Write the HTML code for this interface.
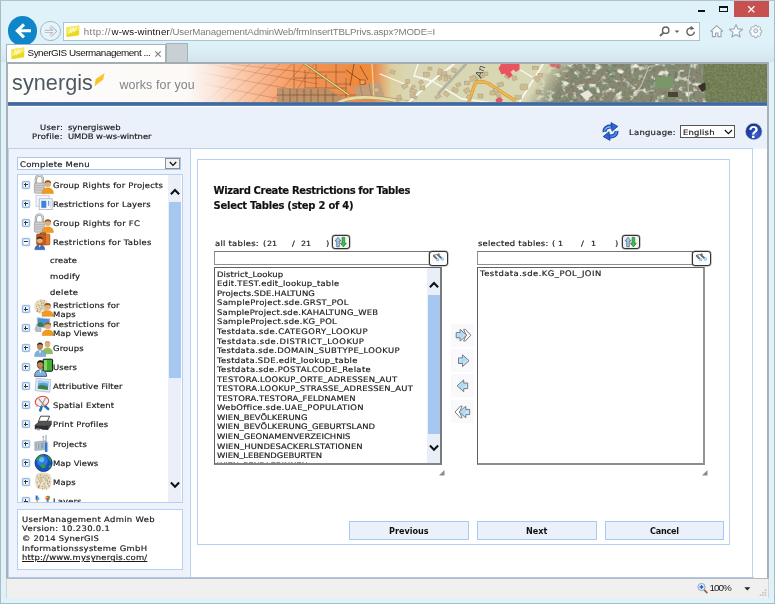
<!DOCTYPE html>
<html lang="en">
<head>
<meta charset="utf-8">
<title>SynerGIS Usermanagement Admin Web</title>
<style>
*{box-sizing:border-box}
html,body{margin:0;padding:0}
body{will-change:transform;width:775px;height:604px;position:relative;overflow:hidden;background:#dff1f9;font-family:"DejaVu Sans","Liberation Sans",sans-serif;font-size:8.4px;letter-spacing:.25px;color:#1a1a1a;line-height:9.6px}
.abs{position:absolute}
svg{position:absolute;overflow:visible}
#frame{position:absolute;left:0;top:0;width:775px;height:604px;border:1px solid #a9bcc3;border-top-color:#b4c3c8;pointer-events:none;z-index:50}
.ui{font-family:"Liberation Sans",sans-serif;letter-spacing:0}
/* browser chrome */
#back{left:7.7px;top:16.2px;width:29.6px;height:29.6px;border-radius:50%;background:#0e86c9}
#fwd{left:40.1px;top:20.7px;width:20.6px;height:20.6px;border-radius:50%;border:1px solid #a3b9c6;background:#e6f4fa}
#addr{left:63px;top:22px;width:636.5px;height:19px;background:#fff;border:1px solid #a9c3d1}
.fav{width:13px;height:11.5px;background:linear-gradient(135deg,#f2e23a 0%,#f7ef8a 45%,#e3c915 100%);border:1px solid #e8d53a}
#tab{left:6px;top:43.6px;width:160px;height:20px;background:#fff;border:1px solid #a3b3bc;border-bottom:none}
#newtab{left:166px;top:43px;width:21.7px;height:19px;background:#c9d0d3;border:1px solid #a7b2b8;border-bottom:none}
#winclose{left:733.5px;top:1px;width:35.5px;height:16px;background:#c75050}
/* page */
#page{left:6px;top:62px;width:763px;height:517px;background:#fff;border:2px solid #a9b1b6;border-bottom:none;border-top-color:#a4adb2}
#status{left:6px;top:578px;width:763px;height:19.5px;background:#f0f0f0;border-left:1px solid #d3d6d8;border-right:1px solid #d3d6d8;border-top:1px solid #b9b9b9}
#banner{left:8px;top:64px;width:759px;height:38.3px;overflow:hidden;background:#fff}
#bline{left:8px;top:102.3px;width:759px;height:4px;background:linear-gradient(#5d82b4,#41679c 35%,#456ba0 70%,#6a8dbd)}
#hband{left:8px;top:107px;width:759px;height:41.5px;background:#ebf1fa}
/* sidebar */
#side{left:8px;top:148px;width:183px;height:430px;background:#edf2fb;border:1px solid #b9d2f3;border-bottom:none}
#msel{left:17px;top:157px;width:163.5px;height:12.8px;background:#fff;border:1px solid #a9c9f0}
#msel span{position:absolute;left:2px;top:1px;font-size:8.8px;white-space:nowrap}
#mselb{left:165.3px;top:158px;width:14.3px;height:10.6px;background:#f2f2f2;border:1px solid #8e8e8e}
#tree{left:17px;top:173.5px;width:165.5px;height:329.2px;background:#fff;border:1px solid #b5d0f2;overflow:hidden}
#tree .in{position:absolute;left:0;top:0;width:150px;height:100%}
.ex{position:absolute;left:3.9px;width:8px;height:8px;border:1px solid #94b8e6;border-radius:1.5px;background:#fff;box-shadow:inset 0 0 0 .5px #a9c7ec,0 0 0 .3px #b5cff0}
.ex:before{content:"";position:absolute;left:1px;top:2.5px;width:4px;height:1px;background:#333}
.ex.plus:after{content:"";position:absolute;left:2.5px;top:1px;width:1px;height:4px;background:#333}
.ic{left:15.5px}
#tsb{left:168.3px;top:174.5px;width:13px;height:327.5px;background:#eaeff9}
#tthumb{left:169px;top:201.8px;width:11.6px;height:176.4px;background:#a6c8f0}
#foot{left:17px;top:509.2px;width:165.5px;height:60.5px;background:#fff;border:1px solid #b5d0f2}
/* main */
#mcell{left:190.5px;top:148px;width:562.5px;height:430px;border:1px solid #b9d2f3;border-left:none;border-bottom:none}
#inner{left:196.5px;top:159px;width:533.5px;height:385.8px;border:1px solid #b5d0f2;background:#fff}
.h1{left:214px;font-weight:700;font-size:10px;letter-spacing:-.22px;white-space:nowrap;line-height:12px;color:#111}
.lbl{white-space:nowrap;font-size:8.5px}
.inp{height:14.4px;background:#fff;border:1px solid #8f8f8f;border-top-color:#777}
.rb{border:1px solid #333;border-radius:3px;background:#f3f3f3;box-shadow:0 0 0 .45px rgba(50,50,50,.55)}
.list{background:#fff;border:1px solid #5f5f5f;border-right-color:#8a8a8a;border-bottom-color:#8a8a8a;overflow:hidden}
.btn{height:19px;background:#ebf1fa;border:1px solid #a9c9f0;font-weight:700;text-align:center;line-height:18.6px;color:#111;white-space:nowrap}
.num{font-size:8px;letter-spacing:.3px}
.abg{left:450.5px;width:23px;height:23px;background:#f9f9fb}
.hl{white-space:nowrap;font-size:8.6px;letter-spacing:.34px}
.t{white-space:nowrap;transform-origin:0 0;-webkit-text-stroke:.17px #1a1a1a}
.t span{position:relative;top:-.9px}
#tstrip{left:1px;top:42px;width:773px;height:20px;background:linear-gradient(#dff1f9,#dbedf5 50%,#d3e4ec)}
</style>
</head>
<body>
<!-- window chrome -->
<div id="tstrip" class="abs"></div>
<div id="back" class="abs"></div>
<svg style="left:7.7px;top:16.2px" width="29.6" height="29.6" viewBox="0 0 29.6 29.6"><path d="M16 8.3l-6.7 6.5 6.7 6.5M9.8 14.8h13.2" fill="none" stroke="#fff" stroke-width="3.1"/></svg>
<div id="fwd" class="abs"></div>
<svg style="left:40.1px;top:20.7px" width="20.6" height="20.6" viewBox="0 0 20.6 20.6"><path d="M10.4 5.6l4.8 4.7-4.8 4.7M4.8 10.3h9.8" fill="none" stroke="#a9b4bb" stroke-width="3" stroke-linejoin="miter"/><path d="M10.4 5.6l4.8 4.7-4.8 4.7M4.8 10.3h9.8" fill="none" stroke="#eef7fb" stroke-width="1.2"/></svg>
<div id="addr" class="abs"></div>
<svg style="left:66px;top:25.2px" width="14" height="13" viewBox="0 0 14 13"><path d="M.5 2.2l12.7-1.7v9.8l-12.7 2z" fill="#ecd91f"/><path d="M.5 2.2l12.7-1.7v4.5l-12.7 4.5z" fill="#f4e75a"/><path d="M3 8.5l1.8-5 .8 3.6 2-4.4.6 3.4 2.8-4" fill="none" stroke="#fffbd0" stroke-width="1.1" opacity=".9"/></svg>
<svg style="left:656px;top:24px" width="42" height="15" viewBox="0 0 42 15"><circle cx="9.7" cy="6.2" r="3.2" fill="none" stroke="#636363" stroke-width="1.4"/><path d="M7.4 8.6l-3.4 3.4" stroke="#636363" stroke-width="1.8"/><path d="M18.6 6.4h4.8l-2.4 2.7z" fill="#636363"/><path d="M36.8 4.7a3.7 3.7 0 1 0 1.5 3" fill="none" stroke="#636363" stroke-width="1.4"/><path d="M34.8 1.8l3.6 2.9-4 1.4z" fill="#636363"/></svg>
<div id="tab" class="abs"></div>
<svg style="left:10.8px;top:47.2px" width="14" height="13" viewBox="0 0 14 13"><path d="M.5 2.2l12.7-1.7v9.8l-12.7 2z" fill="#ecd91f"/><path d="M.5 2.2l12.7-1.7v4.5l-12.7 4.5z" fill="#f4e75a"/><path d="M3 8.5l1.8-5 .8 3.6 2-4.4.6 3.4 2.8-4" fill="none" stroke="#fffbd0" stroke-width="1.1" opacity=".9"/></svg>
<svg style="left:154px;top:49.5px" width="8" height="8" viewBox="0 0 8 8"><path d="M1.3 1.3l5.4 5.4M6.7 1.3l-5.4 5.4" stroke="#7c7c7c" stroke-width="1.1"/></svg>
<div id="newtab" class="abs"></div>
<div id="winclose" class="abs"></div>
<svg style="left:746.5px;top:5px" width="9" height="9" viewBox="0 0 9 9"><path d="M1.2 1.2l6.2 6.2M7.4 1.2l-6.2 6.2" stroke="#fff" stroke-width="1.3"/></svg>
<div class="abs" style="left:698px;top:10px;width:7px;height:2px;background:#111"></div>
<div class="abs" style="left:719px;top:5.5px;width:8.5px;height:6.5px;border:1px solid #111;border-top-width:2px"></div>
<svg style="left:706px;top:22px" width="60" height="18" viewBox="0 0 60 18"><g fill="#f6fbfe" stroke="#9aa6ad" stroke-width="1.1" stroke-linejoin="round"><path d="M4.8 9.2l5.9-5.6 5.9 5.6h-1.6v5.4h-3.1v-3.6h-2.4v3.6h-3.1v-5.4z"/><path d="M30 2.6l1.9 4.3 4.7.4-3.6 3.1 1.1 4.6-4.1-2.5-4.1 2.5 1.1-4.6-3.6-3.1 4.7-.4z"/></g><g transform="translate(49.7 8.8) scale(.86)"><path d="M-1.2-6.3h2.4l.4 1.6 1.2.5 1.4-.9 1.7 1.7-.9 1.4.5 1.2 1.6.4v2.4l-1.6.4-.5 1.2.9 1.4-1.7 1.7-1.4-.9-1.2.5-.4 1.6h-2.4l-.4-1.6-1.2-.5-1.4.9-1.7-1.7.9-1.4-.5-1.2-1.6-.4v-2.4l1.6-.4.5-1.2-.9-1.4 1.7-1.7 1.4.9 1.2-.5z" fill="#f6fbfe" stroke="#9aa6ad" stroke-width="1.1" stroke-linejoin="round"/><circle r="2.3" fill="#dff1f9" stroke="#9aa6ad" stroke-width="1.1"/></g></svg>
<!-- page -->
<div id="page" class="abs"></div>
<div id="status" class="abs"></div>
<svg style="left:695px;top:581px" width="72" height="16" viewBox="0 0 72 16"><circle cx="6.5" cy="6" r="3.6" fill="#e9f2fb" stroke="#8aa4c4" stroke-width="1"/><path d="M4.6 6h3.8M6.5 4.1v3.8" stroke="#1f5fd0" stroke-width="1.3"/><path d="M9.2 8.8l3.2 3.4" stroke="#a0622d" stroke-width="1.7"/><path d="M49.3 6.3h6l-3 3.2z" fill="#222"/><g fill="#bdbdbd"><rect x="69.7" y="8.5" width="1.5" height="1.5"/><rect x="67.2" y="11" width="1.5" height="1.5"/><rect x="69.7" y="11" width="1.5" height="1.5"/><rect x="64.7" y="13.4" width="1.5" height="1.5"/><rect x="67.2" y="13.4" width="1.5" height="1.5"/><rect x="69.7" y="13.4" width="1.5" height="1.5"/></g></svg>

<div id="banner" class="abs">
<svg style="left:0;top:0" width="759" height="39" viewBox="0 0 759 39">
<defs>
<linearGradient id="g1" x1="0" x2="1"><stop offset="0" stop-color="#fdfdfc"/><stop offset=".235" stop-color="#fcf9f6"/><stop offset=".27" stop-color="#fbe6da"/><stop offset=".305" stop-color="#f9ccae"/><stop offset=".34" stop-color="#f7b388"/><stop offset=".375" stop-color="#f59d62"/><stop offset=".41" stop-color="#f3904e"/><stop offset=".483" stop-color="#ea8a4a"/><stop offset=".505" stop-color="#dccf9f"/><stop offset=".525" stop-color="#d9d7b3"/><stop offset=".74" stop-color="#d8d8b5"/><stop offset="1" stop-color="#d5d2ae"/></linearGradient>
<linearGradient id="gf" gradientUnits="userSpaceOnUse" x1="188" x2="285" y1="0" y2="0"><stop offset="0" stop-color="#d9856a" stop-opacity="0"/><stop offset=".5" stop-color="#d37a5c" stop-opacity=".55"/><stop offset="1" stop-color="#b9623f" stop-opacity=".9"/></linearGradient>
<filter id="nz" x="0" y="0" width="100%" height="100%"><feTurbulence type="fractalNoise" baseFrequency=".1 .13" numOctaves="3" seed="7" result="t"/><feColorMatrix in="t" type="matrix" values="0 0 0 0 .22  0 0 0 0 .27  0 0 0 0 .17  3.2 1.6 0 0 -2.05"/><feComposite operator="in" in2="SourceGraphic"/></filter>
<filter id="nz2" x="0" y="0" width="100%" height="100%"><feTurbulence type="fractalNoise" baseFrequency=".13 .16" numOctaves="3" seed="23" result="t"/><feColorMatrix in="t" type="matrix" values="0 0 0 0 .86  0 0 0 0 .85  0 0 0 0 .78  0 3.4 1.8 0 -2.75"/><feComposite operator="in" in2="SourceGraphic"/></filter>
<filter id="nz3" x="0" y="0" width="100%" height="100%"><feTurbulence type="fractalNoise" baseFrequency=".33 .36" numOctaves="2" seed="11" result="t"/><feColorMatrix in="t" type="matrix" values="0 0 0 0 .14  0 0 0 0 .18  0 0 0 0 .11  2.6 0 1.8 0 -2.3"/><feComposite operator="in" in2="SourceGraphic"/></filter>
<linearGradient id="pmg" gradientUnits="userSpaceOnUse" x1="531" y1="13.4" x2="551" y2="25.6"><stop offset="0" stop-color="#fff" stop-opacity="0"/><stop offset="1" stop-color="#fff" stop-opacity="1"/></linearGradient><mask id="pm" maskUnits="userSpaceOnUse" x="500" y="0" width="259" height="39"><rect x="500" width="259" height="39" fill="url(#pmg)"/></mask>
<filter id="nz4" x="0" y="0" width="100%" height="100%"><feTurbulence type="fractalNoise" baseFrequency=".42 .46" numOctaves="2" seed="4" result="t"/><feColorMatrix in="t" type="matrix" values="0 0 0 0 .22  0 0 0 0 .27  0 0 0 0 .15  3.4 0 0 0 -1.35"/><feComposite operator="in" in2="SourceGraphic"/></filter>
<clipPath id="cb"><rect width="759" height="39"/></clipPath>
</defs>
<g clip-path="url(#cb)">
<rect width="759" height="39" fill="url(#g1)"/>
<!-- cadastral parcels -->
<g stroke="url(#gf)" stroke-width=".7" fill="none">
<path d="M196 39l46-39M212 39l46-39M228 39l44-39M244 39l40-39M262 39l34-39M280 39l26-39"/>
<path d="M190 8l120 22M200 0l110 20M196 20l96 19M222 0l90 10"/>
</g>
<g stroke="#7b4a2c" stroke-width=".7" fill="none" opacity=".8">
<path d="M286 0v39M297 6v33M308 0v24M318 10v29M328 0v22M338 14v25M350 0v18"/>
<path d="M286 14h32M297 24h41M308 8h30M318 31h34M328 20h26"/>
</g>
<path d="M269 24h50l14 8 4 7h-68z" fill="#b3906c" opacity=".8"/>
<path d="M275 25v14M282 25v14M289 25v14M296 25v14M303 25v14M310 25v14M317 25v14M325 29v10M269 31h60" stroke="#6f4e33" stroke-width=".6"/>
<path d="M336 4l10-4h14l6 10-8 12-14 2z" fill="#f08a3c"/>
<path d="M338 6l20 14M346 0l-4 22M352 2l8 14" stroke="#5b2f14" stroke-width=".6" fill="none"/>
<rect x="352" y="16" width="5" height="4.5" fill="#f7a25a" stroke="#5b2f14" stroke-width=".5"/>
<path d="M345 23l27-5 5 15-27 3z" fill="#b9a083" opacity=".8"/><path d="M352 22l3 13M361 20l3 14" stroke="#7d6a55" stroke-width=".5"/><path d="M364 0l2 36" stroke="#e9d98a" stroke-width="1.2"/>
<!-- yellow diagonal road -->
<path d="M297 0l44 31" stroke="#7a6a3a" stroke-width="2.3"/><path d="M297 0l44 31" stroke="#f1e089" stroke-width="1.3"/>
<path d="M330 39c10-7 34-7 60-2l14 2" stroke="#a8976a" stroke-width="4.2" fill="none"/><path d="M330 39c10-7 34-7 60-2l14 2" stroke="#ead9a0" stroke-width="2.8" fill="none"/>
<!-- town map -->
<g stroke="#fbfaf3" fill="none" stroke-linecap="round">
<path d="M446 0l-22 17-24 22" stroke-width="1.8"/><path d="M410 0l-4 12 18 5" stroke-width="1.3"/><path d="M424 17l30 18 34 4" stroke-width="1.3"/>
<path d="M372 10l30 12" stroke-width="1.1"/><path d="M535 0l-23.5 38" stroke-width="1.7"/><path d="M512.5 6l11.5 7" stroke-width="1.3"/>
</g>
<path d="M458 0l-28 30" stroke="#b9b8a6" stroke-width="3"/><path d="M458 0l-28 30" stroke="#8f8f86" stroke-width=".6" stroke-dasharray="1.5 1.5"/>
<path d="M460.5 39l6.5-19.5 3-1.5h6.5l4 1.5 27 17.5" stroke="#c99a3a" stroke-width="3.4" fill="none" stroke-linejoin="round"/><path d="M460.5 39l6.5-19.5 3-1.5h6.5l4 1.5 27 17.5" stroke="#f0b84a" stroke-width="2.2" fill="none" stroke-linejoin="round"/>
<g fill="#cdbb94" stroke="#a8946c" stroke-width=".4">
<rect x="484.6" y="25.5" width="5.9" height="4.4" transform="rotate(40 487.6 27.7)"/><rect x="489.5" y="18.5" width="6.0" height="4.1" transform="rotate(-15 492.6 20.6)"/><rect x="489.0" y="30.7" width="3.8" height="3.6" transform="rotate(-15 490.9 32.5)"/><rect x="444.0" y="4.4" width="4.2" height="4.0" transform="rotate(15 446.1 6.4)"/><rect x="427.0" y="31.2" width="5.8" height="3.1" transform="rotate(-30 429.9 32.8)"/><rect x="403.3" y="21.4" width="3.9" height="2.8" transform="rotate(-30 405.3 22.8)"/><rect x="415.2" y="8.1" width="6.4" height="4.3" transform="rotate(0 418.4 10.3)"/><rect x="432.7" y="7.6" width="6.1" height="3.9" transform="rotate(-15 435.8 9.5)"/><rect x="430.2" y="12.9" width="4.0" height="3.0" transform="rotate(-30 432.2 14.4)"/><rect x="435.8" y="28.0" width="5.3" height="3.8" transform="rotate(40 438.4 29.9)"/><rect x="436.8" y="11.2" width="6.0" height="3.6" transform="rotate(0 439.7 13.0)"/><rect x="411.0" y="16.6" width="4.0" height="3.2" transform="rotate(-30 413.1 18.2)"/><rect x="447.9" y="19.1" width="4.8" height="3.4" transform="rotate(-30 450.3 20.8)"/><rect x="456.1" y="24.4" width="5.4" height="4.4" transform="rotate(-30 458.8 26.6)"/><rect x="507.0" y="31.7" width="6.3" height="3.4" transform="rotate(0 510.1 33.4)"/><rect x="530.0" y="9.3" width="4.9" height="3.8" transform="rotate(0 532.4 11.2)"/><rect x="524.4" y="2.2" width="6.3" height="3.0" transform="rotate(0 527.6 3.7)"/><rect x="466.2" y="13.0" width="3.9" height="3.3" transform="rotate(40 468.1 14.6)"/><rect x="471.6" y="11.3" width="4.5" height="3.1" transform="rotate(-30 473.8 12.9)"/><rect x="485.3" y="24.8" width="4.4" height="3.6" transform="rotate(40 487.5 26.6)"/><rect x="388.2" y="33.6" width="5.1" height="3.5" transform="rotate(-15 390.7 35.3)"/><rect x="504.4" y="12.3" width="4.3" height="3.9" transform="rotate(-15 506.5 14.3)"/><rect x="389.4" y="31.2" width="3.6" height="3.6" transform="rotate(-15 391.2 33.0)"/><rect x="401.9" y="25.1" width="6.3" height="3.9" transform="rotate(15 405.1 27.1)"/><rect x="397.9" y="15.3" width="3.9" height="4.2" transform="rotate(0 399.9 17.5)"/><rect x="403.7" y="31.4" width="5.4" height="3.1" transform="rotate(25 406.4 33.0)"/><rect x="456.2" y="17.1" width="5.7" height="3.6" transform="rotate(0 459.0 18.9)"/><rect x="459.0" y="30.8" width="3.8" height="4.2" transform="rotate(25 460.9 32.9)"/><rect x="463.9" y="12.2" width="3.8" height="3.3" transform="rotate(25 465.8 13.8)"/><rect x="525.7" y="12.9" width="5.9" height="4.1" transform="rotate(40 528.7 15.0)"/>
<rect x="382" y="6" width="5" height="3.5" transform="rotate(20 384 8)"/><rect x="394" y="20" width="6" height="4" transform="rotate(-30 397 22)"/><rect x="412" y="22" width="5" height="4"/><rect x="430" y="5" width="4" height="6" transform="rotate(15 432 8)"/><rect x="436" y="12" width="3.5" height="5"/>
<rect x="444" y="24" width="6" height="4" transform="rotate(25 447 26)"/><rect x="462" y="12" width="6" height="5" transform="rotate(-15 465 14)"/><rect x="476" y="8" width="4" height="3.5"/><rect x="482" y="27" width="5" height="4"/><rect x="497" y="10" width="5" height="4" transform="rotate(30 499 12)"/>
<rect x="512" y="20" width="8" height="6" rx="2"/><rect x="528" y="26" width="5" height="4"/><rect x="546" y="22" width="4" height="4"/><rect x="366" y="24" width="5" height="4"/><rect x="402" y="30" width="5" height="3.5"/><rect x="420" y="3" width="4" height="3"/><rect x="470" y="30" width="5" height="4"/>
</g>
<text x="0" y="0" transform="translate(473 14.5) rotate(-68)" font-family="Liberation Sans,sans-serif" font-size="10" fill="#444">An</text>
<path d="M493 0h18.5v5.5l-3.5 2.5-2.5-2.5-3 2.5 2.5 3.5-4 2.5-4.5-4.5-3 1-3-6z" fill="#e85560"/><path d="M487.5 35.5l4-2.5 3.5 2.5-1.5 3h-5z" fill="#e85560"/><path d="M541.5 0h11.5l-1 5-9.5-2.5z" fill="#ee6a6a"/>
<!-- aerial photo -->
<g mask="url(#pm)">
<path d="M538 0h221v39h-246z" fill="#8a8672"/>
<g filter="url(#nz)"><path d="M538 0h221v39h-246z" fill="#000"/></g>
<g filter="url(#nz3)"><path d="M538 0h221v39h-246z" fill="#000"/></g>
<g filter="url(#nz2)"><path d="M538 0h158l6 39h-189z" fill="#000"/></g>
<path d="M647 13l18-1 .6 12-18.6 1z" fill="#7b9668"/>
<path d="M623 36l10-14 8-20" stroke="#c9c9bb" stroke-width="1.3" fill="none" opacity=".8"/><path d="M681 39l-1-22 2-12" stroke="#b9bbb0" stroke-width="1.2" fill="none" opacity=".8"/>
<path d="M572 30l8-4 5 5-7 5z" fill="#e9e6dc"/><path d="M690 22l9-5 4 6-9 5z" fill="#3a3229"/><path d="M660 28h10v5h-10z" fill="#4a4338"/>
<path d="M696 0h63v39h-60c-4-10 2-16-4-24z" fill="#6b7849" opacity=".9"/>
<g filter="url(#nz4)" opacity=".8"><path d="M696 0h63v39h-60c-4-10 2-16-4-24z" fill="#000"/></g>
</g>
</g>
</svg>
<div class="abs ui" style="left:4.1px;top:6.9px;font-size:21.6px;line-height:24px;color:#4c5965;letter-spacing:.05px">synergis</div>
<svg style="left:86px;top:8px" width="12" height="15" viewBox="0 0 12 15"><path d="M1.6 7.2l9-6.2-1.4 6.4-8.6 6.8z" fill="#f7c52b"/></svg>
<div class="abs ui" style="left:111.4px;top:14.4px;font-size:12.4px;line-height:14px;color:#7f858b;letter-spacing:.14px">works for you</div>
</div>
<div id="bline" class="abs"></div>
<div id="hband" class="abs"></div>
<svg style="left:602px;top:121.5px" width="17" height="19" viewBox="0 0 17 19"><g fill="none" stroke-linecap="butt"><path d="M2.6 10c-.4-3.8 3-6 7.4-5.2" stroke="#1a3a96" stroke-width="4"/><path d="M14.4 9c.4 3.8-3 6-7.4 5.2" stroke="#1a3a96" stroke-width="4"/><path d="M2.6 10c-.4-3.8 3-6 7.4-5.2" stroke="#3f8cf0" stroke-width="2"/><path d="M14.4 9c.4 3.8-3 6-7.4 5.2" stroke="#3f8cf0" stroke-width="2"/></g><path d="M9 .6l6.8 3.8-5.8 4.8z" fill="#2b66d8" stroke="#1a3a96" stroke-width=".8"/><path d="M8 18.4l-6.8-3.8 5.8-4.8z" fill="#2b66d8" stroke="#1a3a96" stroke-width=".8"/><path d="M3.6 7.2c.8-1.6 2.8-2.4 5-2.2" stroke="#a9d2fb" stroke-width=".9" fill="none"/></svg>
<div class="abs" style="left:679.6px;top:125px;width:55.2px;height:12.8px;background:#fff;border:1px solid #555"></div>
<svg style="left:723.6px;top:128.6px" width="9" height="6" viewBox="0 0 9 6"><path d="M.8 1l3.6 3.6 3.6-3.6" fill="none" stroke="#111" stroke-width="1.2"/></svg>
<svg style="left:744px;top:121.6px" width="19" height="19" viewBox="0 0 19 19"><defs><radialGradient id="hg" cx=".62" cy=".68" r=".75"><stop offset="0" stop-color="#3f62d2"/><stop offset=".55" stop-color="#1f41ad"/><stop offset="1" stop-color="#12308f"/></radialGradient></defs><circle cx="9.8" cy="9.5" r="8.3" fill="url(#hg)" stroke="#c9c4b4" stroke-width=".7"/><text x="9.7" y="15.5" text-anchor="middle" font-family="Liberation Sans,sans-serif" font-weight="700" font-size="16.5" fill="#fff">?</text></svg>

<!-- sidebar -->
<div id="side" class="abs"></div>
<div id="msel" class="abs"></div>
<div id="mselb" class="abs"></div>
<svg style="left:168.5px;top:160.5px" width="8" height="6" viewBox="0 0 8 6"><path d="M.8 1l3.2 3.4 3.2-3.4" fill="none" stroke="#111" stroke-width="1.3"/></svg>
<div id="tree" class="abs"><div class="in">
<i class="ex plus" style="top:6px"></i>
<svg class="ic" style="top:0px" width="20" height="20" viewBox="0 0 20 20"><path d="M1.9 9.5V4.1a3.5 3.5 0 0 1 7 0V9.5" fill="none" stroke="#8a8a8a" stroke-width="2.3"/><path d="M1.9 9.5V4.1a3.5 3.5 0 0 1 7 0V9.5" fill="none" stroke="#dcdcdc" stroke-width="1.1"/><rect x=".4" y="8" width="10" height="10.2" rx="1" fill="#cfcfcf" stroke="#8f8f8f" stroke-width=".6"/><path d="M.8 10.5h9.2M.8 12.8h9.2M.8 15.1h9.2" stroke="#a9a9a9" stroke-width=".7"/><path d="M8.2 18.5c0-4.2 2.4-5.6 5.6-5.6s5.6 1.4 5.6 5.6z" fill="#f5991b" stroke="#c9710a" stroke-width=".4"/><circle cx="13.8" cy="8.8" r="3.3" fill="#e0b07c"/><path d="M10.5 8.5a3.3 3.3 0 0 1 6.6 0c-1.2-1.6-5.0-1.8-6.6 0z" fill="#8a5a2b"/></svg>
<div class="abs t" style="left:35px;top:6.15px;font-size:7.6px;line-height:9.6px;letter-spacing:0.18px;transform:scaleX(1.11);">Group Rights for Projects</div>
<i class="ex plus" style="top:25.4px"></i>
<svg class="ic" style="top:19.4px" width="20" height="20" viewBox="0 0 20 20"><rect x="2" y="1.3" width="13" height="11" fill="#f3f5f9" stroke="#c2c8d3" stroke-width=".8"/><rect x="5.2" y="4.8" width="13" height="10.8" fill="#f7f8fc" stroke="#aab3c4" stroke-width=".8"/><rect x="7.3" y="6.8" width="5" height="7" fill="#3f83df"/><rect x="14" y="6.8" width="1.2" height="5" fill="#6aa3ea"/><rect x="16" y="6.8" width="1" height="7" fill="#d9dfea"/></svg>
<div class="abs t" style="left:35px;top:25.55px;font-size:7.6px;line-height:9.6px;letter-spacing:0.14px;transform:scaleX(1.11);">Restrictions for Layers</div>
<i class="ex plus" style="top:44.2px"></i>
<svg class="ic" style="top:39px" width="20" height="20" viewBox="0 0 20 20"><path d="M1.9 9.5V4.1a3.5 3.5 0 0 1 7 0V9.5" fill="none" stroke="#8a8a8a" stroke-width="2.3"/><path d="M1.9 9.5V4.1a3.5 3.5 0 0 1 7 0V9.5" fill="none" stroke="#dcdcdc" stroke-width="1.1"/><rect x=".4" y="8" width="10" height="10.2" rx="1" fill="#cfcfcf" stroke="#8f8f8f" stroke-width=".6"/><path d="M.8 10.5h9.2M.8 12.8h9.2M.8 15.1h9.2" stroke="#a9a9a9" stroke-width=".7"/><path d="M8.2 18.5c0-4.2 2.4-5.6 5.6-5.6s5.6 1.4 5.6 5.6z" fill="#f5991b" stroke="#c9710a" stroke-width=".4"/><circle cx="13.8" cy="8.8" r="3.3" fill="#e0b07c"/><path d="M10.5 8.5a3.3 3.3 0 0 1 6.6 0c-1.2-1.6-5.0-1.8-6.6 0z" fill="#8a5a2b"/></svg>
<div class="abs t" style="left:35px;top:44.35px;font-size:7.6px;line-height:9.6px;letter-spacing:0.21px;transform:scaleX(1.11);">Group Rights for FC</div>
<i class="ex minus" style="top:63.4px"></i>
<svg class="ic" style="top:58px" width="20" height="20" viewBox="0 0 20 20"><g transform="translate(-1.4 -.5)"><path d="M8 1.6V.6h5v1" fill="none" stroke="#6b3410" stroke-width="1"/><rect x="4" y="1.4" width="13.2" height="11" rx="1.2" fill="#c8591b" stroke="#8a3a0d" stroke-width=".6"/><rect x="13.5" y="1.6" width="3.4" height="10.6" fill="#e07a2c"/><path d="M2.2 17.2c0-3.4 2-4.6 5-4.6s5 1.2 5 4.6z" fill="#3f6fb5" stroke="#27518f" stroke-width=".4"/><circle cx="7.2" cy="7.4" r="3" fill="#e0b07c"/><path d="M4.1 7.4a3.1 3.1 0 0 1 6.2 0c-1-2-5-2-6.2 0z" fill="#2a2320"/><path d="M6.3 12.7l.9 2.6.9-2.6z" fill="#fff"/></g></svg>
<div class="abs t" style="left:35px;top:63.55px;font-size:7.6px;line-height:9.6px;letter-spacing:0.24px;transform:scaleX(1.11);">Restrictions for Tables</div>
<div class="abs t" style="left:31.6px;top:81.35px;font-size:7.6px;line-height:9.6px;letter-spacing:0.02px;transform:scaleX(1.11);">create</div>
<div class="abs t" style="left:31.6px;top:97.35px;font-size:7.6px;line-height:9.6px;letter-spacing:0.2px;transform:scaleX(1.11);">modify</div>
<div class="abs t" style="left:31.6px;top:113.15px;font-size:7.6px;line-height:9.6px;letter-spacing:0.24px;transform:scaleX(1.11);">delete</div>
<i class="ex plus" style="top:130.7px"></i>
<svg class="ic" style="top:123.7px" width="20" height="20" viewBox="0 0 20 20"><circle cx="7.5" cy="8.5" r="7.3" fill="#e9e0c6"/><path d="M2 6l4 2 3-4M3 12l5-2 4 3M7 2l1 6-2 6M11 4l-2 5 3 5" stroke="#c9b98f" stroke-width=".7" fill="none"/><path d="M3 4h1M6 3h1M9 5h1M4 7h1M7.5 8h1M3 10.5h1M6 11h1M5 14h1M8 14.5h1M7 5.5h1M5 9h1M10 2.5h1M2 8.5h1" stroke="#a8956a" stroke-width=".9"/><circle cx="3.5" cy="13" r=".8" fill="#d3483a"/><circle cx="9" cy="3" r=".6" fill="#c9a24a"/><path d="M8.0 18.3c0-4.2 2.4-5.6 5.6-5.6s5.6 1.4 5.6 5.6z" fill="#f5991b" stroke="#c9710a" stroke-width=".4"/><circle cx="13.6" cy="8.6" r="3.3" fill="#e0b07c"/><path d="M10.3 8.3a3.3 3.3 0 0 1 6.6 0c-1.2-1.6-5.0-1.8-6.6 0z" fill="#8a5a2b"/></svg>
<div class="abs t" style="left:35px;top:126.05px;font-size:7.6px;line-height:9.6px;letter-spacing:0.17px;transform:scaleX(1.11);">Restrictions for</div>
<div class="abs t" style="left:35px;top:135.65px;font-size:7.6px;line-height:9.6px;letter-spacing:0.16px;transform:scaleX(1.11);">Maps</div>
<i class="ex plus" style="top:149.7px"></i>
<svg class="ic" style="top:142.7px" width="20" height="20" viewBox="0 0 20 20"><path d="M1 12.5l2-6h4v8H2z" fill="#b9bec6" stroke="#8d939c" stroke-width=".5"/><path d="M3 .6l13 1.2-.6 9.4L3.6 10z" fill="#4d90d9" stroke="#c9d6e6" stroke-width=".8"/><path d="M3.5 7.2c2-2.5 4-2.5 6 .2l-.2 2.4-5.6-.3z" fill="#3c7a3f"/><path d="M8.2 18.5c0-4.2 2.4-5.6 5.6-5.6s5.6 1.4 5.6 5.6z" fill="#f5991b" stroke="#c9710a" stroke-width=".4"/><circle cx="13.8" cy="8.8" r="3.3" fill="#e0b07c"/><path d="M10.5 8.5a3.3 3.3 0 0 1 6.6 0c-1.2-1.6-5.0-1.8-6.6 0z" fill="#8a5a2b"/></svg>
<div class="abs t" style="left:35px;top:145.05px;font-size:7.6px;line-height:9.6px;letter-spacing:0.17px;transform:scaleX(1.11);">Restrictions for</div>
<div class="abs t" style="left:35px;top:154.65px;font-size:7.6px;line-height:9.6px;letter-spacing:0.04px;transform:scaleX(1.11);">Map Views</div>
<i class="ex plus" style="top:169.1px"></i>
<svg class="ic" style="top:163.1px" width="20" height="20" viewBox="0 0 20 20"><path d="M8.5 15.8c0-4 1.8-5.6 5-5.6s5 1.6 5 5.6z" fill="#8fbf5a" stroke="#5f9034" stroke-width=".4"/><ellipse cx="13.5" cy="6.6" rx="2.7" ry="3.3" fill="#e0b07c"/><path d="M10.7 6.2a2.8 3.3 0 0 1 5.6 0c-.8-2-4.8-2-5.6 0z" fill="#c9a45c"/><path d="M.6 18.6c0-4.4 2.2-6 5.6-6s5.6 1.6 5.6 6z" fill="#7fb0df" stroke="#4c7db0" stroke-width=".4"/><ellipse cx="6" cy="8.4" rx="2.9" ry="3.5" fill="#b98654"/><path d="M3 8a3 3.5 0 0 1 6 0c-1-2.4-5-2.4-6 0z" fill="#2b2622"/><path d="M5 12.8l1 3 1-3z" fill="#fff"/></svg>
<div class="abs t" style="left:35px;top:169.25px;font-size:7.6px;line-height:9.6px;letter-spacing:0.12px;transform:scaleX(1.11);">Groups</div>
<i class="ex plus" style="top:188.2px"></i>
<svg class="ic" style="top:182.2px" width="20" height="20" viewBox="0 0 20 20"><rect x="9" y="2.2" width="9.6" height="12" rx=".8" fill="#43b02f" stroke="#111" stroke-width="1"/><rect x="10" y="3" width="3" height="10.4" fill="#7fd862"/><path d="M.6 19.4c0-4.6 2.4-6.4 6-6.4s6 1.8 6 6.4z" fill="#7fb0df" stroke="#1c2a3d" stroke-width=".7"/><ellipse cx="6.4" cy="7.8" rx="3.2" ry="3.9" fill="#b98654" stroke="#201a16" stroke-width=".5"/><path d="M3.1 7.2a3.3 3.9 0 0 1 6.6 0c-1-2.6-5.6-2.6-6.6 0z" fill="#1d1916"/><path d="M5.4 13.2l1 3.2 1-3.2z" fill="#fff"/></svg>
<div class="abs t" style="left:35px;top:188.35px;font-size:7.6px;line-height:9.6px;letter-spacing:0.09px;transform:scaleX(1.11);">Users</div>
<i class="ex plus" style="top:207.5px"></i>
<svg class="ic" style="top:201.5px" width="20" height="20" viewBox="0 0 20 20"><path d="M2.2 2.2l14.6 1.4-1 12.6-14.6-1.6z" fill="#dfeaf5" stroke="#a8bdd2" stroke-width=".8"/><path d="M4.4 4.6l10.2 1-.7 8.2-10.1-1.1z" fill="#5e9fd8"/><path d="M3.9 10.2c3-2.2 6.6-1.4 10.2.6l-.2 3-10.1-1.1z" fill="#3f7f45"/><path d="M4.4 4.6l10.2 1-.2 2.4c-3-1.4-7-1.6-10.2-.6z" fill="#a9d0f2"/></svg>
<div class="abs t" style="left:35px;top:207.65px;font-size:7.6px;line-height:9.6px;letter-spacing:0.07px;transform:scaleX(1.11);">Attributive Filter</div>
<i class="ex plus" style="top:226.6px"></i>
<svg class="ic" style="top:220.6px" width="20" height="20" viewBox="0 0 20 20"><ellipse cx="8" cy="6.4" rx="6.8" ry="5" fill="#fbecec" stroke="#d8443c" stroke-width="1" transform="rotate(-12 8 6.4)"/><path d="M4.5 3.5l7.5 9M11.5 3l-5 9.5" stroke="#9a9a9a" stroke-width="1.2"/><path d="M11.4 11.6l2.8 2.4" stroke="#1d6fc4" stroke-width="2.6" stroke-linecap="round"/><path d="M7.4 12.4l-1.2 3" stroke="#1d6fc4" stroke-width="2.6" stroke-linecap="round"/><path d="M1.6 11.4h4" stroke="#bdbdbd" stroke-width=".8"/></svg>
<div class="abs t" style="left:35px;top:226.75px;font-size:7.6px;line-height:9.6px;letter-spacing:0.14px;transform:scaleX(1.11);">Spatial Extent</div>
<i class="ex plus" style="top:245.8px"></i>
<svg class="ic" style="top:239.8px" width="20" height="20" viewBox="0 0 20 20"><path d="M6.6 2.2h9l-2.6 6H4.2z" fill="#fff" stroke="#333" stroke-width=".9"/><path d="M.8 11.4l5-4.2h11.8l-3.6 4.8z" fill="#555" stroke="#222" stroke-width=".6"/><path d="M.8 11.4l13.2.6v4l-13.2-.8z" fill="#2e2e2e"/><path d="M14 12l3.6-4.8v3.6l-3.6 5.2z" fill="#444"/><path d="M2.2 14.6l5 .4 1.2 1.6-5.4-.4z" fill="#f2f2f2"/><path d="M3 15.6l3 .2" stroke="#2a7fd6" stroke-width=".8"/></svg>
<div class="abs t" style="left:35px;top:245.95px;font-size:7.6px;line-height:9.6px;letter-spacing:0.18px;transform:scaleX(1.11);">Print Profiles</div>
<i class="ex plus" style="top:265.1px"></i>
<svg class="ic" style="top:259.1px" width="20" height="20" viewBox="0 0 20 20"><path d="M.8 8l10-1.2v9l-10 .6z" fill="#b6c3cf" stroke="#7d8b99" stroke-width=".5"/><path d="M2 9.4l7.6-.8v5.8l-7.6.4z" fill="#8fa1b3"/><path d="M3.4 9.3v5.4M6 9v5.6" stroke="#d7dfe7" stroke-width=".8"/><path d="M10.8 6.8l3 1.4v9l-3-1.4z" fill="#d9e1e9" stroke="#8c99a6" stroke-width=".4"/><path d="M12 1v17" stroke="#5b6f86" stroke-width=".7"/><path d="M9.3 2.4v4" stroke="#8795a3" stroke-width=".7"/><rect x="11" y="8.6" width="2.2" height="9.4" fill="#2f78cf"/><circle cx="9.4" cy="2.6" r=".9" fill="#9aa7b4"/></svg>
<div class="abs t" style="left:35px;top:265.25px;font-size:7.6px;line-height:9.6px;letter-spacing:0.07px;transform:scaleX(1.11);">Projects</div>
<i class="ex plus" style="top:284px"></i>
<svg class="ic" style="top:278px" width="20" height="20" viewBox="0 0 20 20"><circle cx="9.6" cy="10" r="8.6" fill="#1b4fc0"/><circle cx="8.4" cy="8" r="5.4" fill="#2f86e8" opacity=".8"/><circle cx="7.6" cy="6.6" r="2.6" fill="#7cc4f6" opacity=".8"/><path d="M3.2 4.6c2-2.6 4.6-3.4 7-3-1 1.6-2.6 1.4-3.6 3-1 .8-2.2 2.4-3.8 3.2-.6-1-.4-2.2.4-3.2z" fill="#2ea52c"/><path d="M13 2.6c2.4 1.2 4.2 3.2 4.8 5.6-1.2.6-2.2-.6-2.8-2-.8-1.4-2-2-2-3.6z" fill="#2ea52c"/><path d="M6.6 11.6c1.8-.8 4.2.2 5.4 1.6-.6 1.6-2.4 2.4-4 1.8-1.2-.6-2-2-1.4-3.4z" fill="#2ea52c"/><path d="M15.2 12.4c1 .2 1.8-.2 2.4-1-.2 1.8-1 3.4-2.2 4.4-.6-1-.8-2.4-.2-3.4z" fill="#2ea52c"/><circle cx="9.6" cy="10" r="8.6" fill="none" stroke="#0d2c7a" stroke-width=".8"/></svg>
<div class="abs t" style="left:35px;top:284.15px;font-size:7.6px;line-height:9.6px;letter-spacing:0.04px;transform:scaleX(1.11);">Map Views</div>
<i class="ex plus" style="top:303.4px"></i>
<svg class="ic" style="top:297.4px" width="20" height="20" viewBox="0 0 20 20"><path d="M3 1.8c3-1.8 9-1.8 12.4.2 2.4 2.4 2.6 9 .8 13.4-2.4 2.6-9.6 3-13 .8C.6 12.8.4 5.2 3 1.8z" fill="#e6dcc2"/><path d="M2 5l5 2 4-4 5 3M1.6 10l6-1 5 3 4-2M4 15l3-5-1-7M10 17l1-6 4-6M7 2l6 5 2 8" stroke="#cbbd96" stroke-width=".8" fill="none"/><path d="M3 8l3 4 5-2 3 5" stroke="#f6f1e2" stroke-width=".8" fill="none"/><path d="M3 4h1M6 3h1M9 5h1M12 3.5h1M14 6h1M4 7h1M7.5 8h1M11 8h1M15 9.5h1M3 10.5h1M6 11h1M9.5 11.5h1M13 12h1M5 14h1M8 14.5h1M11.5 15h1M14.5 14h1M7 5.5h1M10.5 6.5h1M5 9h1M13 9h1M8 16.5h1M12 17h1" stroke="#a8956a" stroke-width=".9"/><circle cx="4.6" cy="15" r=".8" fill="#d4463a"/></svg>
<div class="abs t" style="left:35px;top:303.55px;font-size:7.6px;line-height:9.6px;letter-spacing:0.16px;transform:scaleX(1.11);">Maps</div>
<i class="ex plus" style="top:322.5px"></i>
<svg class="ic" style="top:316.5px" width="20" height="20" viewBox="0 0 20 20"><rect x="1.6" y="4.6" width="2.2" height="4.2" fill="#2f6fc9"/><rect x="3.2" y="6.2" width="2" height="3" fill="#5aa7e6"/><rect x="2.4" y="8.8" width="1.6" height="2" fill="#e0a030"/><circle cx="13.6" cy="7" r="2.2" fill="#d94a3a"/><circle cx="14.6" cy="6" r="1.2" fill="#4fae3f"/><circle cx="12.6" cy="6.4" r="1" fill="#f2c84b"/><rect x="12.6" y="9" width="2" height="2" fill="#3f8fdf"/></svg>
<div class="abs t" style="left:35px;top:322.65px;font-size:7.6px;line-height:9.6px;letter-spacing:0.09px;transform:scaleX(1.11);">Layers</div>
</div></div>
<div id="tsb" class="abs"></div>
<div id="tthumb" class="abs"></div>
<svg style="left:170px;top:188px" width="10" height="8" viewBox="0 0 10 8"><path d="M.9 6.3l4.1-4.3 4.1 4.3" fill="none" stroke="#111" stroke-width="2"/></svg>
<svg style="left:170px;top:481px" width="10" height="8" viewBox="0 0 10 8"><path d="M.9 1.5l4.1 4.3 4.1-4.3" fill="none" stroke="#111" stroke-width="2"/></svg>
<div id="foot" class="abs"></div>
<div class="abs" style="left:8px;top:576.5px;width:745.5px;height:1.5px;background:#adc9ef"></div>
<!-- main -->
<div id="mcell" class="abs"></div>
<div id="inner" class="abs"></div>
<div class="abs rb" style="left:332px;top:235px;width:18px;height:14.2px"></div>
<svg style="left:332px;top:235.2px" width="17.5" height="14.2" viewBox="0 0 17.5 14.2"><path d="M6 2.3l3 3.7h-1.7v5.8h-2.6v-5.8h-1.7z" fill="#a9cbe8" stroke="#3f5f80" stroke-width=".7"/><path d="M11.4 11.9l-3-3.7h1.7v-5.8h2.6v5.8h1.7z" fill="#3cc04b" stroke="#1d7a2b" stroke-width=".7"/></svg>
<div class="abs inp" style="left:214.2px;top:251px;width:215.8px"></div>
<div class="abs rb" style="left:429px;top:251px;width:18.8px;height:14.6px;background:#fdfdfd"></div>
<svg style="left:429px;top:251px" width="18.5" height="14.6" viewBox="0 0 18.5 14.6"><g stroke="#6a6a6a" stroke-width="1.9" stroke-linecap="round"><path d="M4.8 4.9l3.5 3.5"/><path d="M9 4l4 3.7"/></g><path d="M4.2 4.3l4.6-.9 1.2-1 .6 1.3" fill="none" stroke="#666" stroke-width=".8"/><circle cx="8.8" cy="8.8" r="1.5" fill="#7fc0f6"/><circle cx="13.4" cy="8" r="1.6" fill="#7fc0f6"/><circle cx="8.6" cy="8.5" r=".8" fill="#cfe8fd"/><circle cx="13.2" cy="7.7" r=".8" fill="#cfe8fd"/></svg>
<div class="abs list" style="left:214px;top:267px;width:228px;height:198.4px;border-right:2px solid #7a7a7a;border-bottom:2px solid #858585">
<div class="abs t" style="left:2.1px;top:1.65px;font-size:7.6px;line-height:9.6px;letter-spacing:0.09px;transform:scaleX(1.11);">District<span>_</span>Lookup</div>
<div class="abs t" style="left:2.1px;top:11.2px;font-size:7.6px;line-height:9.6px;letter-spacing:0.23px;transform:scaleX(1.11);">Edit.TEST.edit<span>_</span>lookup<span>_</span>table</div>
<div class="abs t" style="left:2.1px;top:20.75px;font-size:7.6px;line-height:9.6px;letter-spacing:0.11px;transform:scaleX(1.11);">Projects.SDE.HALTUNG</div>
<div class="abs t" style="left:2.1px;top:30.3px;font-size:7.6px;line-height:9.6px;letter-spacing:0.26px;transform:scaleX(1.11);">SampleProject.sde.GRST<span>_</span>POL</div>
<div class="abs t" style="left:2.1px;top:39.85px;font-size:7.6px;line-height:9.6px;letter-spacing:0.17px;transform:scaleX(1.11);">SampleProject.sde.KAHALTUNG<span>_</span>WEB</div>
<div class="abs t" style="left:2.1px;top:49.4px;font-size:7.6px;line-height:9.6px;letter-spacing:0.25px;transform:scaleX(1.11);">SampleProject.sde.KG<span>_</span>POL</div>
<div class="abs t" style="left:2.1px;top:58.95px;font-size:7.6px;line-height:9.6px;letter-spacing:0.37px;transform:scaleX(1.11);">Testdata.sde.CATEGORY<span>_</span>LOOKUP</div>
<div class="abs t" style="left:2.1px;top:68.5px;font-size:7.6px;line-height:9.6px;letter-spacing:0.46px;transform:scaleX(1.11);">Testdata.sde.DISTRICT<span>_</span>LOOKUP</div>
<div class="abs t" style="left:2.1px;top:78.05px;font-size:7.6px;line-height:9.6px;letter-spacing:0.3px;transform:scaleX(1.11);">Testdata.sde.DOMAIN<span>_</span>SUBTYPE<span>_</span>LOOKUP</div>
<div class="abs t" style="left:2.1px;top:87.6px;font-size:7.6px;line-height:9.6px;letter-spacing:0.26px;transform:scaleX(1.11);">Testdata.SDE.edit<span>_</span>lookup<span>_</span>table</div>
<div class="abs t" style="left:2.1px;top:97.15px;font-size:7.6px;line-height:9.6px;letter-spacing:0.33px;transform:scaleX(1.11);">Testdata.sde.POSTALCODE<span>_</span>Relate</div>
<div class="abs t" style="left:2.1px;top:106.7px;font-size:7.6px;line-height:9.6px;letter-spacing:0.19px;transform:scaleX(1.11);">TESTORA.LOOKUP<span>_</span>ORTE<span>_</span>ADRESSEN<span>_</span>AUT</div>
<div class="abs t" style="left:2.1px;top:116.25px;font-size:7.6px;line-height:9.6px;letter-spacing:0.18px;transform:scaleX(1.11);">TESTORA.LOOKUP<span>_</span>STRASSE<span>_</span>ADRESSEN<span>_</span>AUT</div>
<div class="abs t" style="left:2.1px;top:125.8px;font-size:7.6px;line-height:9.6px;letter-spacing:0.06px;transform:scaleX(1.11);">TESTORA.TESTORA<span>_</span>FELDNAMEN</div>
<div class="abs t" style="left:2.1px;top:135.35px;font-size:7.6px;line-height:9.6px;letter-spacing:0.27px;transform:scaleX(1.11);">WebOffice.sde.UAE<span>_</span>POPULATION</div>
<div class="abs t" style="left:2.1px;top:144.9px;font-size:7.6px;line-height:9.6px;letter-spacing:0px;transform:scaleX(1.11);">WIEN<span>_</span>BEVÖLKERUNG</div>
<div class="abs t" style="left:2.1px;top:154.45px;font-size:7.6px;line-height:9.6px;letter-spacing:0.01px;transform:scaleX(1.11);">WIEN<span>_</span>BEVÖLKERUNG<span>_</span>GEBURTSLAND</div>
<div class="abs t" style="left:2.1px;top:164px;font-size:7.6px;line-height:9.6px;letter-spacing:0.01px;transform:scaleX(1.11);">WIEN<span>_</span>GEONAMENVERZEICHNIS</div>
<div class="abs t" style="left:2.1px;top:173.55px;font-size:7.6px;line-height:9.6px;letter-spacing:0.1px;transform:scaleX(1.11);">WIEN<span>_</span>HUNDESACKERLSTATIONEN</div>
<div class="abs t" style="left:2.1px;top:183.1px;font-size:7.6px;line-height:9.6px;letter-spacing:-0.07px;transform:scaleX(1.11);">WIEN<span>_</span>LEBENDGEBURTEN</div>
<div class="abs t" style="left:2.1px;top:192.65px;font-size:7.6px;line-height:9.6px;letter-spacing:-0.09px;transform:scaleX(1.11);">WIEN<span>_</span>PENDLERINNEN</div>
</div>
<div class="abs" style="left:427px;top:268px;width:13px;height:195px;background:#e9eff9"></div>
<div class="abs" style="left:428px;top:295px;width:12px;height:139px;background:#a6c8f0"></div>
<svg style="left:428.8px;top:280.8px" width="10" height="8" viewBox="0 0 10 8"><path d="M.9 6.3l4.1-4.3 4.1 4.3" fill="none" stroke="#111" stroke-width="2"/></svg>
<svg style="left:428.8px;top:443.6px" width="10" height="8" viewBox="0 0 10 8"><path d="M.9 1.5l4.1 4.3 4.1-4.3" fill="none" stroke="#111" stroke-width="2"/></svg>
<svg style="left:439px;top:469.8px" width="6" height="6" viewBox="0 0 6 6"><path d="M5.5 0v5.5h-5.5z" fill="#8a8a8a"/></svg>

<div class="abs rb" style="left:621.5px;top:235px;width:18px;height:14.2px"></div>
<svg style="left:621.5px;top:235.2px" width="17.5" height="14.2" viewBox="0 0 17.5 14.2"><path d="M6 2.3l3 3.7h-1.7v5.8h-2.6v-5.8h-1.7z" fill="#a9cbe8" stroke="#3f5f80" stroke-width=".7"/><path d="M11.4 11.9l-3-3.7h1.7v-5.8h2.6v5.8h1.7z" fill="#3cc04b" stroke="#1d7a2b" stroke-width=".7"/></svg>
<div class="abs inp" style="left:477.4px;top:251px;width:215.5px"></div>
<div class="abs rb" style="left:692px;top:251px;width:18.8px;height:14.6px;background:#fdfdfd"></div>
<svg style="left:692px;top:251px" width="18.5" height="14.6" viewBox="0 0 18.5 14.6"><g stroke="#6a6a6a" stroke-width="1.9" stroke-linecap="round"><path d="M4.8 4.9l3.5 3.5"/><path d="M9 4l4 3.7"/></g><path d="M4.2 4.3l4.6-.9 1.2-1 .6 1.3" fill="none" stroke="#666" stroke-width=".8"/><circle cx="8.8" cy="8.8" r="1.5" fill="#7fc0f6"/><circle cx="13.4" cy="8" r="1.6" fill="#7fc0f6"/><circle cx="8.6" cy="8.5" r=".8" fill="#cfe8fd"/><circle cx="13.2" cy="7.7" r=".8" fill="#cfe8fd"/></svg>
<div class="abs list" style="left:477px;top:267px;width:228px;height:198.4px;border-right:2px solid #949494;border-bottom:2px solid #8c8c8c">
</div>
<svg style="left:702.2px;top:469.8px" width="6" height="6" viewBox="0 0 6 6"><path d="M5.5 0v5.5h-5.5z" fill="#8a8a8a"/></svg>

<!-- move arrows -->
<div class="abs abg" style="top:323.5px"></div>
<div class="abs abg" style="top:349px"></div>
<div class="abs abg" style="top:374.2px"></div>
<div class="abs abg" style="top:400.3px"></div>
<svg style="left:452px;top:326px" width="22" height="96" viewBox="452 326 22 96">
<defs><linearGradient id="ag" x1="0" y1="0" x2="1" y2="1"><stop offset="0" stop-color="#f2faff"/><stop offset=".45" stop-color="#a6d8f8"/><stop offset="1" stop-color="#eef8fe"/></linearGradient></defs>
<g fill="url(#ag)" stroke="#6b6e73" stroke-width=".9" stroke-linejoin="round">
<path d="M463.6 329.4h1.8l5.4 5.8-5.4 5.8h-1.8l2.6-5.8z" fill="#fff"/>
<path d="M456.2 332.6h3.9v-3.2l6.7 5.8-6.7 5.8v-3.2h-3.9z"/>
<path d="M458.5 357.9h4v-3.1l6.6 5.9-6.6 5.9v-3.1h-4z"/>
<path d="M467.7 383h-4v-3.1l-6.6 5.9 6.6 5.9v-3.1h4z"/>
<path d="M462.2 406.2h-1.8l-5.4 5.8 5.4 5.8h1.8l-2.6-5.8z" fill="#fff"/>
<path d="M469.7 409.4h-3.9v-3.2l-6.7 5.8 6.7 5.8v-3.2h3.9z"/>
</g></svg>

<!-- buttons -->

<div class="abs t" style="left:40px;top:122.75px;font-size:7.6px;line-height:9.6px;letter-spacing:0.2px;transform:scaleX(1.11);">User:</div>
<div class="abs t" style="left:67.7px;top:122.75px;font-size:7.6px;line-height:9.6px;letter-spacing:-0.02px;transform:scaleX(1.11);">synergisweb</div>
<div class="abs t" style="left:32.3px;top:132.05px;font-size:7.6px;line-height:9.6px;letter-spacing:0.19px;transform:scaleX(1.11);">Profile:</div>
<div class="abs t" style="left:67.7px;top:132.05px;font-size:7.6px;line-height:9.6px;letter-spacing:-0.06px;transform:scaleX(1.11);">UMDB w-ws-wintner</div>
<div class="abs t" style="left:628.7px;top:127.75px;font-size:7.6px;line-height:9.6px;letter-spacing:0.24px;transform:scaleX(1.11);">Language:</div>
<div class="abs t" style="left:683px;top:127.55px;font-size:7.6px;line-height:9.6px;letter-spacing:0.16px;transform:scaleX(1.11);">English</div>
<div class="abs t" style="left:19.6px;top:159.95px;font-size:7.6px;line-height:9.6px;letter-spacing:0.23px;transform:scaleX(1.11);">Complete Menu</div>
<div class="abs t" style="left:21.9px;top:514.85px;font-size:7.6px;line-height:9.6px;letter-spacing:0.28px;transform:scaleX(1.11);">UserManagement Admin Web</div>
<div class="abs t" style="left:21.9px;top:524.4px;font-size:7.6px;line-height:9.6px;letter-spacing:0.29px;transform:scaleX(1.11);">Version: 10.230.0.1</div>
<div class="abs t" style="left:21.9px;top:533.95px;font-size:7.6px;line-height:9.6px;letter-spacing:0.19px;transform:scaleX(1.11);">© 2014 SynerGIS</div>
<div class="abs t" style="left:21.9px;top:543.5px;font-size:7.6px;line-height:9.6px;letter-spacing:0.28px;transform:scaleX(1.11);">Informationssysteme GmbH</div>
<div class="abs t" style="left:21.9px;top:553.05px;font-size:7.6px;line-height:9.6px;letter-spacing:0.17px;transform:scaleX(1.11);text-decoration:underline;text-decoration-thickness:.8px;text-underline-offset:.8px;">http://www.mysynergis.com/</div>
<div class="abs t" style="left:213.5px;top:185.04px;font-size:10px;line-height:12px;font-weight:700;letter-spacing:-0.36px;color:#111">Wizard Create Restrictions for Tables</div>
<div class="abs t" style="left:213.5px;top:199.84px;font-size:10px;line-height:12px;font-weight:700;letter-spacing:-0.26px;color:#111">Select Tables (step 2 of 4)</div>
<div class="abs t" style="left:214.7px;top:239.15px;font-size:7.6px;line-height:9.6px;letter-spacing:0.23px;transform:scaleX(1.11);">all tables:</div>
<div class="abs t" style="left:262.9px;top:239.15px;font-size:7.6px;line-height:9.6px;letter-spacing:0.25px;transform:scaleX(1.11);">(</div>
<div class="abs t" style="left:267.4px;top:239.38px;font-size:7.2px;line-height:9.6px;letter-spacing:-0.06px;transform:scaleX(1.11);">21</div>
<div class="abs t" style="left:291.9px;top:239.15px;font-size:7.6px;line-height:9.6px;letter-spacing:0.25px;transform:scaleX(1.11);">/</div>
<div class="abs t" style="left:300.6px;top:239.38px;font-size:7.2px;line-height:9.6px;letter-spacing:-0.06px;transform:scaleX(1.11);">21</div>
<div class="abs t" style="left:326px;top:239.15px;font-size:7.6px;line-height:9.6px;letter-spacing:0.25px;transform:scaleX(1.11);">)</div>
<div class="abs t" style="left:477.6px;top:239.15px;font-size:7.6px;line-height:9.6px;letter-spacing:0.21px;transform:scaleX(1.11);">selected tables:</div>
<div class="abs t" style="left:552px;top:239.15px;font-size:7.6px;line-height:9.6px;letter-spacing:0.25px;transform:scaleX(1.11);">(</div>
<div class="abs t" style="left:557.8px;top:239.38px;font-size:7.2px;line-height:9.6px;letter-spacing:0.25px;transform:scaleX(1.11);">1</div>
<div class="abs t" style="left:581px;top:239.15px;font-size:7.6px;line-height:9.6px;letter-spacing:0.25px;transform:scaleX(1.11);">/</div>
<div class="abs t" style="left:590.5px;top:239.38px;font-size:7.2px;line-height:9.6px;letter-spacing:0.25px;transform:scaleX(1.11);">1</div>
<div class="abs t" style="left:615.2px;top:239.15px;font-size:7.6px;line-height:9.6px;letter-spacing:0.25px;transform:scaleX(1.11);">)</div>
<div class="abs t" style="left:480.1px;top:269.45px;font-size:7.6px;line-height:9.6px;letter-spacing:0.41px;transform:scaleX(1.11);">Testdata.sde.KG<span>_</span>POL<span>_</span>JOIN</div>
<div class="abs btn" style="left:349px;top:520.5px;width:119.6px;font-size:8.1px;letter-spacing:-0.02px">Previous</div>
<div class="abs btn" style="left:476.8px;top:520.5px;width:119.8px;font-size:8.1px;letter-spacing:0.01px">Next</div>
<div class="abs btn" style="left:604.5px;top:520.5px;width:119.8px;font-size:8.1px;letter-spacing:-0.23px">Cancel</div>
<div class="abs ui" style="left:83.7px;top:25.94px;font-size:9.7px;line-height:12px;letter-spacing:0.43px;color:#7b7b7b;white-space:nowrap">http://</div>
<div class="abs ui" style="left:111.6px;top:25.94px;font-size:9.7px;line-height:12px;letter-spacing:0.14px;color:#111;white-space:nowrap">w-ws-wintner</div>
<div class="abs ui" style="left:169.9px;top:25.94px;font-size:9.7px;line-height:12px;letter-spacing:-0.15px;color:#7b7b7b;white-space:nowrap">/UserManagementAdminWeb/frmInsertTBLPrivs.aspx?MODE=I</div>
<div class="abs ui" style="left:27.5px;top:47.47px;font-size:9.9px;line-height:12px;letter-spacing:-0.45px;color:#111;white-space:nowrap">SynerGIS Usermanagement ...</div>
<div class="abs ui" style="left:709.6px;top:582.47px;font-size:9.9px;line-height:12px;letter-spacing:-1.02px;color:#222;white-space:nowrap">100%</div>
<div id="frame"></div>
</body>
</html>
